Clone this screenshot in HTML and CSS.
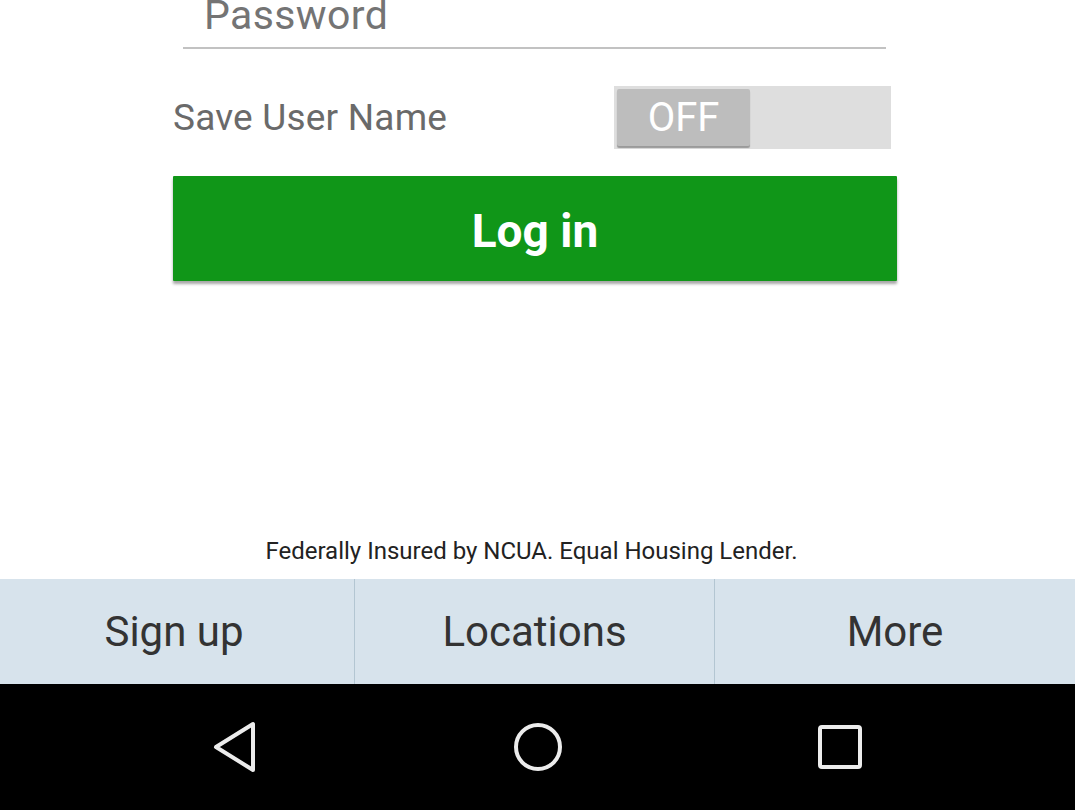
FILE: index.html
```html
<!DOCTYPE html>
<html lang="en">
<head>
<meta charset="utf-8">
<title>Log in</title>
<link rel="stylesheet" href="styles.css">
</head>
<body>
<div class="screen">
  <main class="form">
    <div class="pw-field">
      <div class="pw-text">Password</div>
      <div class="pw-line"></div>
    </div>
    <div class="save-row">
      <span class="save-label">Save User Name</span>
      <div class="toggle">
        <div class="thumb">OFF</div>
      </div>
    </div>
    <button class="login">Log in</button>
  </main>
  <p class="disclaimer">Federally Insured by NCUA. Equal Housing Lender.</p>
  <nav class="tabs">
    <div class="tab">Sign up</div>
    <div class="tab">Locations</div>
    <div class="tab">More</div>
  </nav>
  <div class="sysnav">
    <svg class="navicon" viewBox="0 0 60 60" width="60" height="60">
      <path d="M11 30 L48 7 L48 53 Z" fill="none" stroke="#ececec" stroke-width="4" stroke-linejoin="round"/>
    </svg>
    <svg class="navicon" viewBox="0 0 60 60" width="60" height="60">
      <circle cx="30" cy="30" r="22" fill="none" stroke="#ececec" stroke-width="4"/>
    </svg>
    <svg class="navicon" viewBox="0 0 60 60" width="60" height="60">
      <rect x="9" y="10" width="40" height="40" rx="2" fill="none" stroke="#ececec" stroke-width="4"/>
    </svg>
  </div>
</div>
</body>
</html>
```
FILE: styles.css
```css
* { box-sizing: border-box; }
html, body { margin: 0; padding: 0; background: #fff; }
body { font-family: Roboto, "Noto Sans", "Liberation Sans", sans-serif; }
.screen {
  width: 1075px;
  height: 810px;
  display: flex;
  flex-direction: column;
  overflow: hidden;
}
.form {
  padding: 0 178px 0 173px;
  display: flex;
  flex-direction: column;
}
.pw-field {
  margin: 0 11px 0 10px;
  height: 49px;
  display: flex;
  flex-direction: column;
  justify-content: flex-end;
}
.pw-text {
  font-size: 41px;
  line-height: 40px;
  color: #747474;
  padding-left: 21px;
  margin-bottom: 12px;
  letter-spacing: 0.4px;
}
.pw-line {
  height: 7px;
  border: 2px solid #c2c2c2;
  border-top: none;
}
.save-row {
  margin-top: 37px;
  height: 63px;
  display: flex;
  align-items: center;
  justify-content: space-between;
  padding-right: 6px;
}
.save-label {
  font-size: 37px;
  color: #6a6a6a;
  letter-spacing: 0.2px;
}
.toggle {
  width: 277px;
  height: 63px;
  background: #dedede;
  padding: 3px;
}
.thumb {
  width: 133px;
  height: 57px;
  background: #bdbdbd;
  border-radius: 2px;
  box-shadow: 0 2px 1px #9a9a9a;
  color: #fff;
  font-size: 40px;
  line-height: 57px;
  text-align: center;
}
.login {
  margin-top: 27px;
  width: 724px;
  height: 105px;
  background: #109618;
  border: none;
  border-radius: 1px;
  color: #fff;
  font-family: inherit;
  font-weight: 700;
  font-size: 46px;
  line-height: 46px;
  box-shadow: 0 3px 3px rgba(0,0,0,0.35);
  padding: 4px 0 0 0;
}
.disclaimer {
  margin: auto 0 0 0;
  padding: 0 12px 14px 0;
  text-align: center;
  font-size: 24px;
  color: #222;
  line-height: 28px;
}
.tabs {
  height: 105px;
  display: grid;
  grid-template-columns: 354px 360px 1fr;
  background: #d7e3ec;
}
.tab {
  display: flex;
  align-items: center;
  justify-content: center;
  font-size: 42px;
  color: #333;
}
.tab + .tab { border-left: 1px solid #b3c6d2; }
.tab:first-child { padding-right: 6px; }
.sysnav {
  height: 126px;
  background: #000;
  display: flex;
  align-items: center;
  justify-content: center;
  gap: 243px;
}
.navicon { display: block; }
```
